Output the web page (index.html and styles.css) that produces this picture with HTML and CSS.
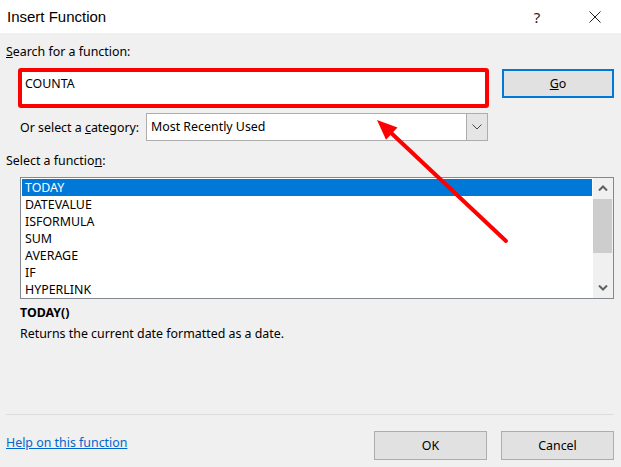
FILE: index.html
```html
<!DOCTYPE html>
<html lang="en">
<head>
    <meta charset="UTF-8">
    <meta name="viewport" content="width=device-width, initial-scale=1.0">
    <title>Insert Function</title>
    <link rel="stylesheet" href="styles.css">
</head>
<body>
    <div class="dialog">
        <div class="titlebar">
            <div class="title">Insert Function</div>
            <div class="title-help">?</div>
            <div class="title-close">
                <svg width="12" height="12" viewBox="0 0 12 12">
                    <path d="M0.5 0.5 L11.5 11.5 M11.5 0.5 L0.5 11.5" stroke="#222" stroke-width="1" fill="none"/>
                </svg>
            </div>
        </div>

        <div class="content">
            <div class="label"><u>S</u>earch for a function:</div>

            <div class="search-row">
                <div class="search-box">COUNTA</div>
                <button class="btn btn-go"><u>G</u>o</button>
            </div>

            <div class="category-row">
                <div class="category-label">Or select a <u>c</u>ategory:</div>
                <div class="select">
                    <div class="select-value">Most Recently Used</div>
                    <div class="select-arrow">
                        <svg width="10" height="6" viewBox="0 0 10 6">
                            <path d="M0.5 0.5 L5 5 L9.5 0.5" stroke="#444" stroke-width="1" fill="none"/>
                        </svg>
                    </div>
                </div>
            </div>

            <div class="label label-list">Select a functio<u>n</u>:</div>

            <div class="listbox">
                <ul class="list-items">
                    <li class="selected">TODAY</li>
                    <li>DATEVALUE</li>
                    <li>ISFORMULA</li>
                    <li>SUM</li>
                    <li>AVERAGE</li>
                    <li>IF</li>
                    <li>HYPERLINK</li>
                </ul>
                <div class="scrollbar">
                    <div class="scroll-btn">
                        <svg width="10" height="6" viewBox="0 0 10 6">
                            <path d="M1 5.5 L5 1.5 L9 5.5" stroke="#606060" stroke-width="2" fill="none"/>
                        </svg>
                    </div>
                    <div class="scroll-track">
                        <div class="scroll-thumb"></div>
                    </div>
                    <div class="scroll-btn">
                        <svg width="10" height="6" viewBox="0 0 10 6">
                            <path d="M1 0.5 L5 4.5 L9 0.5" stroke="#606060" stroke-width="2" fill="none"/>
                        </svg>
                    </div>
                </div>
            </div>

            <div class="func-sig">TODAY()</div>
            <div class="func-desc">Returns the current date formatted as a date.</div>
        </div>

        <div class="footer">
            <a class="help-link" href="#">Help on this function</a>
            <div class="footer-buttons">
                <button class="btn btn-footer">OK</button>
                <button class="btn btn-footer">Cancel</button>
            </div>
        </div>

        <!-- annotation arrow drawn over the dialog -->
        <svg class="annotation" width="621" height="467" viewBox="0 0 621 467">
            <line x1="506" y1="241" x2="388" y2="130" stroke="#ff0000" stroke-width="4" stroke-linecap="round"/>
            <polygon points="377,120 397.5,127.5 386,139.8" fill="#ff0000"/>
        </svg>
    </div>
</body>
</html>
```

FILE: styles.css
```css
body {
    margin: 0;
    background: #f0f0f0;
    font-family: 'Noto Sans', 'Liberation Sans', sans-serif;
    font-size: 12.4px;
    color: #000;
}

.dialog {
    position: relative;
    width: 621px;
    height: 467px;
    overflow: hidden;
}

.titlebar {
    height: 33px;
    background: #fff;
    display: flex;
    align-items: center;
}

.title {
    font-family: 'Liberation Sans', sans-serif;
    font-size: 15px;
    padding-left: 7px;
    flex: 1;
    color: #000;
}

.title-help {
    font-size: 15px;
    width: 20px;
    text-align: center;
    margin-right: 42px;
    color: #222;
}

.title-close {
    width: 12px;
    height: 12px;
    margin-right: 20px;
    display: flex;
}

.content {
    padding: 0 7px 0 6px;
}

.label {
    line-height: 16px;
    margin-top: 11px;
}

.search-row {
    display: flex;
    margin-top: 8px;
    padding-left: 12px;
}

.search-box {
    box-sizing: border-box;
    width: 471px;
    height: 40px;
    background: #fff;
    border: 4px solid #ff0000;
    border-radius: 3px;
    padding: 4px 0 0 3px;
    line-height: 16px;
}

.btn {
    font-family: 'Noto Sans', 'Liberation Sans', sans-serif;
    font-size: 12.4px;
    color: #000;
    background: #e1e1e1;
    border: 1px solid #adadad;
    padding: 0;
    box-sizing: border-box;
}

.btn-go {
    width: 112px;
    height: 29px;
    margin-left: 13px;
    margin-top: 1px;
    border: 2px solid #0078d7;
}

.category-row {
    display: flex;
    align-items: center;
    margin-top: 5px;
    padding-left: 14px;
}

.category-label {
    width: 126px;
}

.select {
    box-sizing: border-box;
    width: 342px;
    height: 28px;
    background: #fff;
    border: 1px solid #adadad;
    display: flex;
}

.select-value {
    flex: 1;
    line-height: 26px;
    padding-left: 4px;
}

.select-arrow {
    width: 20px;
    background: #e5e5e5;
    border-left: 1px solid #adadad;
    display: flex;
    align-items: center;
    justify-content: center;
}

.label-list {
    margin-top: 12px;
}

.listbox {
    box-sizing: border-box;
    width: 594px;
    height: 122px;
    margin-top: 8px;
    margin-left: 14px;
    background: #fff;
    border: 1px solid #828790;
    display: flex;
}

.list-items {
    list-style: none;
    margin: 0;
    padding: 1px;
    flex: 1;
}

.list-items li {
    height: 17px;
    line-height: 17px;
    padding-left: 3px;
}

.list-items li.selected {
    background: #0078d7;
    color: #fff;
}

.scrollbar {
    width: 20px;
    background: #f0f0f0;
    display: flex;
    flex-direction: column;
}

.scroll-btn {
    height: 20px;
    display: flex;
    align-items: center;
    justify-content: center;
}

.scroll-track {
    flex: 1;
}

.scroll-thumb {
    height: 54px;
    margin: 1px 1px 0 0;
    background: #cdcdcd;
}

.func-sig {
    font-weight: bold;
    line-height: 16px;
    margin-top: 6px;
    margin-left: 14px;
}

.func-desc {
    line-height: 16px;
    margin-top: 5px;
    margin-left: 14px;
}

.footer {
    margin: 72px 7px 0 6px;
    border-top: 1px solid #dcdcdc;
    padding-top: 16px;
    display: flex;
    justify-content: space-between;
    align-items: flex-start;
}

.help-link {
    color: #0066cc;
    text-decoration: underline;
    margin-top: 4px;
    line-height: 16px;
}

.footer-buttons {
    display: flex;
    gap: 14px;
}

.btn-footer {
    width: 113px;
    height: 29px;
}

.annotation {
    position: absolute;
    top: 0;
    left: 0;
    pointer-events: none;
}
```
